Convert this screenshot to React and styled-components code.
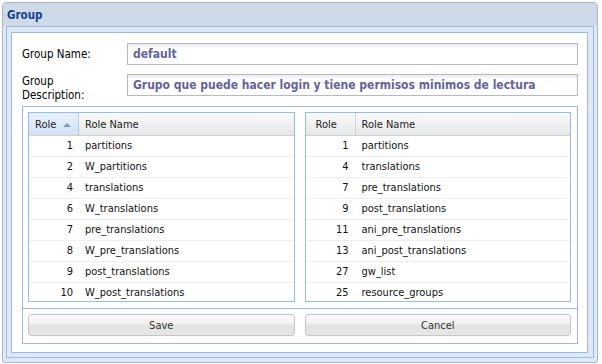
import React from "react";
import styled, { createGlobalStyle } from "styled-components";

const GlobalStyle = createGlobalStyle`
  html, body {
    margin: 0;
    padding: 0;
    background: #ffffff;
  }
  body {
    font-family: "DejaVu Sans Condensed", "DejaVu Sans", sans-serif;
  }
`;

const Page = styled.div`
  width: 602px;
  height: 364px;
  padding: 2px 4px 1px 2px;
  box-sizing: border-box;
  display: flex;
`;

const Window = styled.div`
  flex: 1;
  min-height: 0;
  display: flex;
  flex-direction: column;
  border: 1px solid #a7b6ca;
  border-radius: 4px 4px 3px 3px;
  background: #dfe8f6;
  overflow: hidden;
`;

const Header = styled.div`
  height: 23px;
  flex-shrink: 0;
  display: flex;
  align-items: center;
  padding-left: 4px;
  background: #cedae8;
  color: #15428b;
  font-size: 11.5px;
  font-weight: bold;
`;

const Frame = styled.div`
  flex: 1;
  min-height: 0;
  margin: 0 3px 4px 3px;
  border: 1px solid #99bbe8;
  padding: 5px 5px 4px 4px;
  display: flex;
`;

const Panel = styled.div`
  flex: 1;
  border: 1px solid #99bbe8;
  background: #ffffff;
  padding: 10px 9px 8px 10px;
  display: flex;
  flex-direction: column;
`;

const FieldRow = styled.div`
  display: flex;
  align-items: flex-start;
  height: 22px;
  flex-shrink: 0;
  margin-bottom: ${(p) => p.$gap}px;
`;

const Label = styled.div`
  width: 105px;
  flex-shrink: 0;
  padding-top: ${(p) => p.$pt}px;
  font-size: 11.5px;
  line-height: 13.5px;
  color: #000;
`;

const Input = styled.div`
  flex: 1;
  height: 22px;
  box-sizing: border-box;
  border: 1px solid #b5b8c8;
  background: linear-gradient(#ececec 0, #ffffff 5px);
  padding-left: 5px;
  display: flex;
  align-items: center;
  font-size: 12px;
  font-weight: bold;
  color: #62639b;
  white-space: nowrap;
`;

const Box = styled.div`
  flex: 1;
  border: 1px solid #99bbe8;
  display: flex;
  flex-direction: column;
`;

const Grids = styled.div`
  display: flex;
  gap: 10px;
  padding: 5px 6px 6px 5px;
`;

const Grid = styled.div`
  flex: 1;
  height: 190px;
  box-sizing: border-box;
  border: 1px solid #99bbe8;
  display: flex;
  flex-direction: column;
  overflow: hidden;
`;

const HeadRow = styled.div`
  display: flex;
  height: 22px;
  flex-shrink: 0;
  border-bottom: 1px solid #d0d0d0;
  background: linear-gradient(#fafafa, #e6e7e9);
`;

const HeadCell = styled.div`
  width: ${(p) => (p.$w ? `${p.$w}px` : "auto")};
  flex: ${(p) => (p.$w ? "none" : 1)};
  box-sizing: border-box;
  display: flex;
  align-items: center;
  padding-left: ${(p) => p.$pl}px;
  font-size: 11px;
  color: #222;
  border-right: ${(p) => (p.$w ? `1px solid ${p.$sorted ? "#b3cbe9" : "#d0d0d0"}` : "none")};
  background: ${(p) =>
    p.$sorted ? "linear-gradient(#e8f1fb, #d2e2f5)" : "transparent"};
`;

const SortArrow = styled.span`
  width: 0;
  height: 0;
  margin-left: 7px;
  margin-top: 1px;
  border-left: 4px solid transparent;
  border-right: 4px solid transparent;
  border-bottom: 4px solid #6f9ad3;
`;

const Body = styled.div`
  flex: 1;
  overflow: hidden;
`;

const Row = styled.div`
  display: flex;
  height: 21px;
  box-sizing: border-box;
  border-bottom: 1px solid #ededed;
  font-size: 11px;
  color: #111;
`;

const NumCell = styled.div`
  width: ${(p) => p.$w}px;
  flex: none;
  box-sizing: border-box;
  text-align: right;
  padding-right: ${(p) => p.$pr}px;
  line-height: 20px;
`;

const NameCell = styled.div`
  flex: 1;
  padding-left: 6px;
  line-height: 20px;
  white-space: nowrap;
`;

const ButtonBar = styled.div`
  border-top: 1px solid #99bbe8;
  display: flex;
  gap: 10px;
  padding: 5px 6px 5px 5px;
`;

const Button = styled.button`
  flex: 1;
  height: 22px;
  border: 1px solid #c6c6c6;
  border-radius: 3px;
  background: linear-gradient(#fafafa 0%, #f1f1f1 45%, #e3e3e3 50%, #e6e6e6 100%);
  font-family: inherit;
  font-size: 11px;
  color: #333;
  padding: 0;
`;

const left = [
  [1, "partitions"],
  [2, "W_partitions"],
  [4, "translations"],
  [6, "W_translations"],
  [7, "pre_translations"],
  [8, "W_pre_translations"],
  [9, "post_translations"],
  [10, "W_post_translations"],
];

const right = [
  [1, "partitions"],
  [4, "translations"],
  [7, "pre_translations"],
  [9, "post_translations"],
  [11, "ani_pre_translations"],
  [13, "ani_post_translations"],
  [27, "gw_list"],
  [25, "resource_groups"],
];

const RoleGrid = ({ rows, sorted, pr }) => (
  <Grid>
    <HeadRow>
      <HeadCell $w={50} $pl={sorted ? 6 : 10} $sorted={sorted}>
        Role
        {sorted && <SortArrow />}
      </HeadCell>
      <HeadCell $pl={6}>Role Name</HeadCell>
    </HeadRow>
    <Body>
      {rows.map(([id, name]) => (
        <Row key={id}>
          <NumCell $w={50} $pr={pr}>
            {id}
          </NumCell>
          <NameCell>{name}</NameCell>
        </Row>
      ))}
    </Body>
  </Grid>
);

export default function App() {
  return (
    <>
      <GlobalStyle />
      <Page>
        <Window>
          <Header>Group</Header>
          <Frame>
            <Panel>
              <FieldRow $gap={9}>
                <Label $pt={5}>Group Name:</Label>
                <Input>default</Input>
              </FieldRow>
              <FieldRow $gap={10}>
                <Label $pt={1}>
                  Group
                  <br />
                  Description:
                </Label>
                <Input>Grupo que puede hacer login y tiene permisos minimos de lectura</Input>
              </FieldRow>
              <Box>
                <Grids>
                  <RoleGrid rows={left} sorted pr={6} />
                  <RoleGrid rows={right} pr={7} />
                </Grids>
                <ButtonBar>
                  <Button>Save</Button>
                  <Button>Cancel</Button>
                </ButtonBar>
              </Box>
            </Panel>
          </Frame>
        </Window>
      </Page>
    </>
  );
}
